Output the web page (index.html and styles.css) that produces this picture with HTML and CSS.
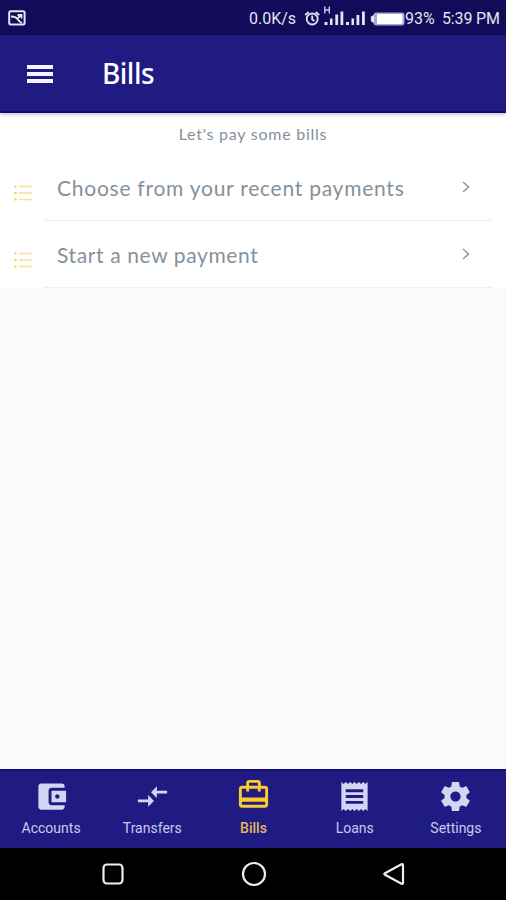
FILE: index.html
```html
<!DOCTYPE html>
<html lang="en">
<head>
<meta charset="utf-8">
<title>Bills</title>
<link rel="stylesheet" href="styles.css">
</head>
<body>
<div class="screen">
  <div class="status">
    <svg class="shot" width="18" height="16" viewBox="0 0 18 16" fill="none" stroke="#e4e3f1" stroke-width="2"><rect x="1.2" y="1.2" width="15.4" height="13.4" rx="1.5"/><path d="M3 6.500Q8 6.500 9.500 9T14 13M9.500 5H13.500V8.500M13 5L10 8" stroke-width="1.800"/></svg>
    <span class="speed">0.0K/s</span>
    <svg class="signals" width="102" height="22" viewBox="0 0 102 22" fill="#e4e3f1">
      <g fill="none" stroke="#e4e3f1" stroke-width="1.800"><circle cx="9.200" cy="13" r="5.500"/><path d="M9.200 9.500V13.500L11.500 15M2.200 9L5.700 6M16.200 9L12.700 6"/></g>
      <path d="M21.800 .5V7.500M26.300 .5V7.500M21.800 4H26.300" stroke="#c9c8e4" stroke-width="1.400"/>
      <path d="M21.500 16h3V19h-3zM27 12.500h2.500v6.500H27zM32.300 8.500h2.800V19h-2.800zM37.500 5.500h2.800V19h-2.800zM43 16h3V19h-3zM48.500 12.500h2.500v6.500H48.500zM53.500 9h2.800v10h-2.800zM59 5.500h2.800V19H59z"/>
      <rect x="70.500" y="6.500" width="31" height="13" rx="3" fill="#aaa9cf"/><rect x="74" y="8" width="25.500" height="10" rx="1" fill="#fff"/><path d="M71 9.500L68.500 11v4L71 16.500" stroke="#e4e3f1" stroke-width="1.300"/>
    </svg>
    <span class="percent">93%</span>
    <span class="clock">5:39 PM</span>
  </div>
  <header class="bar">
    <div class="burger"><i></i><i></i><i></i></div>
    <h1>Bills</h1>
  </header>
  <main>
    <section class="panel">
      <p class="hint"><span>Let's pay some bills</span></p>
      <div class="row">
        <svg class="list" width="19" height="18" viewBox="0 0 19 18"><path d="M5 2.500H18M5 9H18M5 15.500H18"/><path class="dots" d="M.5 2.500h2M.5 9h2M.5 15.500h2"/></svg>
        <div class="item"><span class="choose">Choose from your recent payments</span><svg class="chev" width="8" height="12" viewBox="0 0 8 12"><path d="M1 1L6.500 6L1 11"/></svg></div>
      </div>
      <div class="row">
        <svg class="list" width="19" height="18" viewBox="0 0 19 18"><path d="M5 2.500H18M5 9H18M5 15.500H18"/><path class="dots" d="M.5 2.500h2M.5 9h2M.5 15.500h2"/></svg>
        <div class="item"><span class="start">Start a new payment</span><svg class="chev" width="8" height="12" viewBox="0 0 8 12"><path d="M1 1L6.500 6L1 11"/></svg></div>
      </div>
    </section>
  </main>
  <nav class="tabs">
    <div class="tab"><svg viewBox="0 0 24 24"><path d="M21 18v1c0 1.100-.9 2-2 2H5c-1.110 0-2-.9-2-2V5c0-1.100.89-2 2-2h14c1.100 0 2 .9 2 2v1h-9c-1.110 0-2 .9-2 2v8c0 1.100.89 2 2 2h9zm-9-2h10V8H12v8zm4-2.500c-.83 0-1.500-.67-1.500-1.500s.67-1.500 1.500-1.500 1.500.67 1.500 1.500-.67 1.500-1.500 1.500z"/></svg><span>Accounts</span></div>
    <div class="tab"><svg viewBox="0 0 24 24"><path d="M9.010 14H2v2h7.010v3L13 15l-3.990-4v3zm5.980-1v-3H22V8h-7.010V5L11 9l3.990 4z"/></svg><span>Transfers</span></div>
    <div class="tab active"><svg viewBox="0 0 24 24"><path d="M20 6h-3V4c0-1.110-.89-2-2-2H9c-1.110 0-2 .89-2 2v2H4c-1.110 0-2 .89-2 2v11c0 1.110.89 2 2 2h16c1.110 0 2-.89 2-2V8c0-1.110-.89-2-2-2zM9 4h6v2H9V4zm11 15H4v-2h16v2zm0-5H4V8h3v2h2V8h6v2h2V8h3v6z"/></svg><span>Bills</span></div>
    <div class="tab"><svg viewBox="0 0 24 24"><path d="M18 17H6v-2h12v2zm0-4H6v-2h12v2zm0-4H6V7h12v2zM3 22l1.500-1.500L6 22l1.500-1.500L9 22l1.500-1.500L12 22l1.500-1.500L15 22l1.500-1.500L18 22l1.500-1.500L21 22V2l-1.500 1.500L18 2l-1.500 1.500L15 2l-1.500 1.500L12 2l-1.500 1.500L9 2 7.500 3.500 6 2 4.500 3.500 3 2v20z"/></svg><span>Loans</span></div>
    <div class="tab"><svg viewBox="0 0 24 24"><path d="M19.430 12.980c.04-.32.070-.64.070-.98s-.03-.66-.07-.98l2.110-1.650c.19-.15.240-.42.120-.64l-2-3.460c-.12-.22-.39-.3-.61-.22l-2.490 1c-.52-.4-1.080-.73-1.690-.98l-.38-2.650C14.460 2.180 14.250 2 14 2h-4c-.25 0-.46.180-.49.420l-.38 2.650c-.61.250-1.170.590-1.690.98l-2.490-1c-.23-.09-.49 0-.61.220l-2 3.460c-.13.220-.07.490.12.640l2.110 1.650c-.04.320-.07.650-.07.980s.03.660.07.980l-2.110 1.650c-.19.150-.24.420-.12.640l2 3.460c.12.220.39.300.61.220l2.490-1c.52.400 1.080.730 1.690.98l.38 2.650c.03.240.240.420.49.420h4c.25 0 .46-.18.490-.42l.38-2.650c.61-.25 1.170-.59 1.690-.98l2.490 1c.23.090.49 0 .61-.22l2-3.460c.12-.22.070-.49-.12-.64l-2.110-1.650zM12 15.500c-1.930 0-3.500-1.570-3.500-3.500s1.570-3.500 3.500-3.500 3.500 1.570 3.500 3.500-1.570 3.500-3.500 3.500z"/></svg><span>Settings</span></div>
  </nav>
  <div class="system">
    <svg width="24" height="24" viewBox="0 0 24 24"><rect x="2.500" y="2.500" width="19" height="19" rx="3.500"/></svg>
    <svg width="26" height="26" viewBox="0 0 26 26"><circle cx="13" cy="13" r="11"/></svg>
    <svg width="24" height="24" viewBox="0 0 24 24"><path d="M19.500 2.200Q21 1.500 21 3.200V20.800Q21 22.500 19.500 21.800L3 12.800Q1.600 12 3 11.200Z"/></svg>
  </div>
</div>
</body>
</html>
```

FILE: styles.css
```css
* { box-sizing: border-box; }
body { margin: 0; font-family: Roboto, sans-serif; }
.screen { width: 506px; height: 900px; display: flex; flex-direction: column; background: #fafafa; overflow: hidden; }
.status { height: 35px; background: #110b59; color: #e4e3f1; display: flex; align-items: center; padding: 1px 7px 0 8px; font-size: 16px; white-space: nowrap; }
.shot { margin-right: auto; }
.speed { width: 47px; margin-right: 7px; }
.signals { margin-top: -3px; }
.percent { width: 31px; }
.clock { margin-left: 6px; width: 57px; letter-spacing: -.15px; }
.bar { height: 78px; background: #201b83; border-bottom: 2px solid #140a78; display: flex; align-items: center; padding-left: 27px; color: #fff; box-shadow: 0 1px 4px rgba(0, 0, 0, .3); z-index: 1; }
.burger { display: grid; gap: 3px; width: 26px; margin-top: 1px; }
.burger i { height: 4px; background: #f4f3ff; }
h1 { margin: 0 0 0 49px; font: 500 28px/40px "Noto Sans", sans-serif; letter-spacing: -.5px; }
main { flex: 1; }
.panel { height: 175px; background: #fff; color: #84919d; font-family: Lato, sans-serif; }
.hint { margin: 0; height: 41px; line-height: 42px; font-size: 16px; text-align: center; letter-spacing: .75px; }
.row { height: 67px; display: flex; padding: 0 14px 0 14px; }
.list { margin-top: 30px; margin-right: 11px; fill: none; stroke: #fbdf9b; stroke-width: 1.700; }
.dots { stroke: #f7c548; stroke-width: 2; }
.item { flex: 1; display: flex; align-items: center; justify-content: space-between; padding: 0 22px 0 13px; border-bottom: 1px solid #eeeff0; font-size: 21px; white-space: nowrap; }
.choose { letter-spacing: .75px; }
.start { letter-spacing: .62px; }
.chev { fill: none; stroke: #8f989e; stroke-width: 1.500; }
.tabs { height: 79px; background: #201b83; border-top: 2px solid #140a78; display: grid; grid-template-columns: repeat(5, 1fr); }
.tab { display: flex; flex-direction: column; align-items: center; padding-top: 8px; padding-left: 1px; color: #c9cbea; font-size: 14px; line-height: 18px; }
.tab svg { width: 35px; height: 35px; fill: #d3d5f2; }
.tab span { margin-top: 5px; }
.active { padding-top: 6px; color: #e5b55e; font-weight: 500; }
.active svg { fill: #fdca2b; }
.active span { margin-top: 7px; }
.system { height: 52px; background: #000; display: flex; align-items: center; justify-content: space-between; padding: 0 100px 0 101px; }
.system svg { fill: none; stroke: #eee; stroke-width: 2.200; }
```
